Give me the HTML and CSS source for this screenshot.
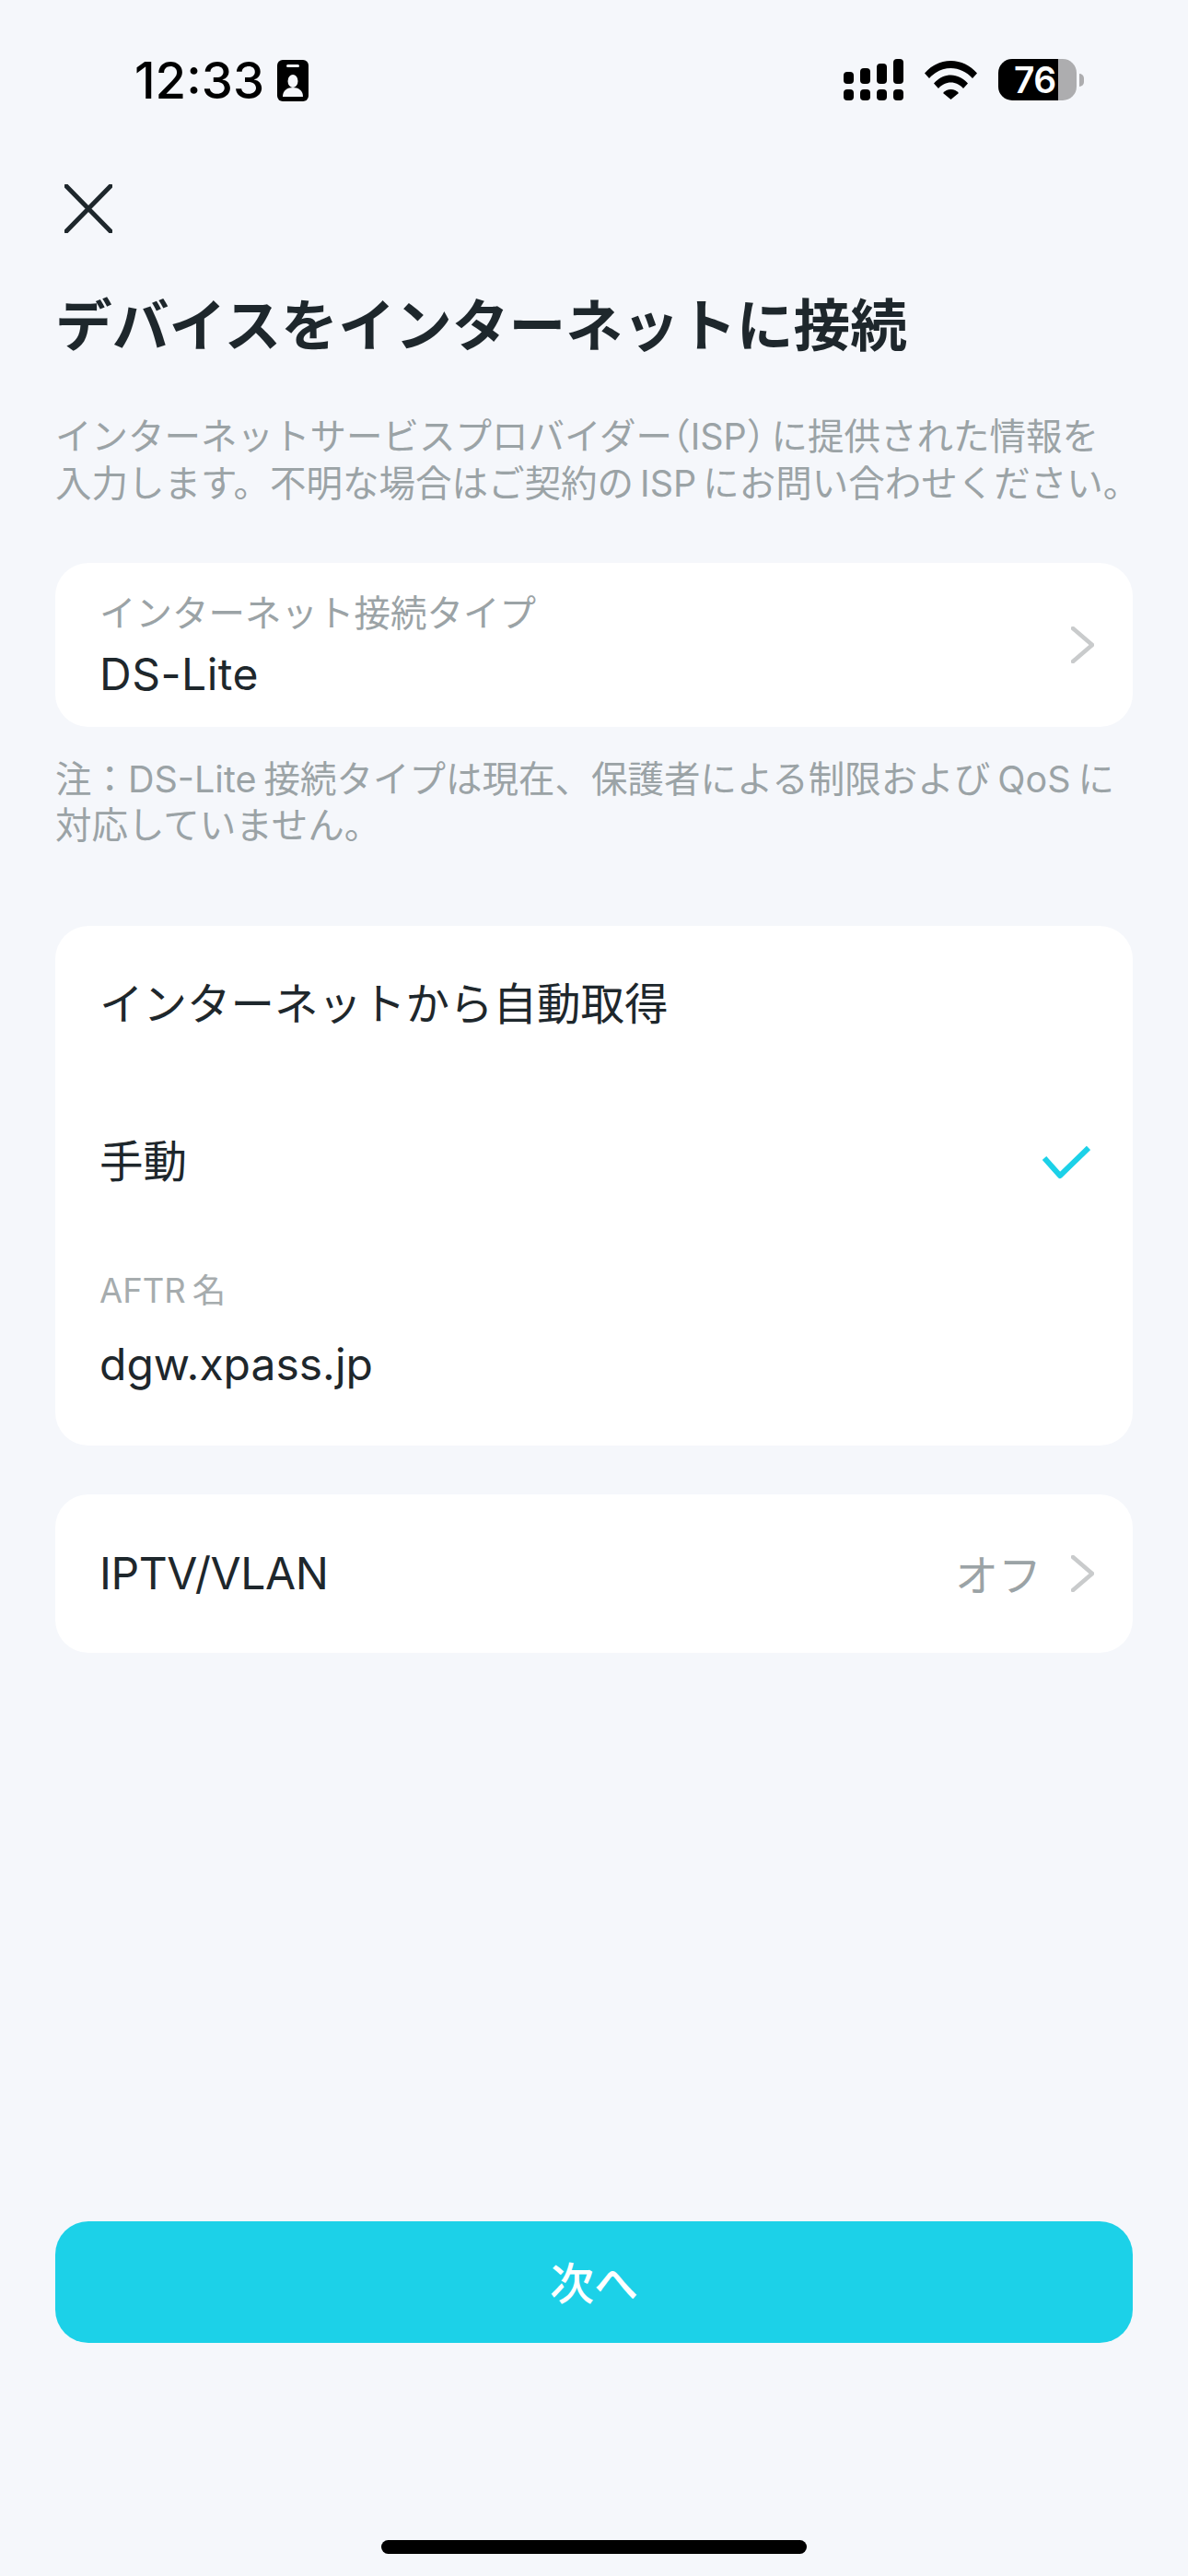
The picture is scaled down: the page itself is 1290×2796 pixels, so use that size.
FILE: index.html
```html
<!DOCTYPE html>
<html lang="ja">
<head>
    <meta charset="UTF-8">
    <meta name="viewport" content="width=device-width, initial-scale=1.0">
    <title>デバイスをインターネットに接続</title>
    <link rel="stylesheet" href="styles.css">
</head>
<body>
    <header class="status-bar">
        <div class="status-left">
            <span class="clock">12:33</span>
            <svg class="id-icon" viewBox="0 0 34 45">
                <rect width="34" height="45" rx="6" fill="#000"/>
                <rect x="10" y="5" width="14" height="3" rx="1.5" fill="#f5f7fb"/>
                <ellipse cx="17" cy="23" rx="5.5" ry="7" fill="#f5f7fb"/>
                <path d="M6 40c0-7 5-10 11-10s11 3 11 10z" fill="#f5f7fb"/>
            </svg>
        </div>
        <div class="status-right">
            <svg class="signal-icon" viewBox="0 0 65 45">
                <rect x="0" y="14" width="11" height="13" rx="4"/>
                <rect x="18" y="10" width="11" height="17" rx="4"/>
                <rect x="36" y="5" width="11" height="22" rx="4"/>
                <rect x="54" y="0" width="11" height="27" rx="4"/>
                <rect x="0" y="33" width="11" height="12" rx="4"/>
                <rect x="18" y="33" width="11" height="12" rx="4"/>
                <rect x="36" y="33" width="11" height="12" rx="4"/>
                <rect x="54" y="33" width="11" height="12" rx="4"/>
            </svg>
            <svg class="wifi-icon" viewBox="0 0 57 42">
                <path d="M0 13.500C7.500 5 17.500 0 28.500 0S49.500 5 57 13.500l-5 5.500C45.500 12 37.500 8 28.500 8S11.500 12 5 19z"/>
                <path d="M10 24.500C15 19 21.500 15.500 28.500 15.500S42 19 47 24.500l-5 5.500c-3.500-4-8.500-6.500-13.500-6.500S18.500 26 15 30z"/>
                <path d="M20 35c2.200-2.500 5.200-4 8.500-4s6.300 1.500 8.500 4l-8.500 7z"/>
            </svg>
            <div class="battery">
                <span class="battery-level">76</span>
            </div>
            <span class="battery-nub"></span>
        </div>
    </header>

    <main class="content">
        <button class="close-btn" aria-label="閉じる">
            <svg viewBox="0 0 52 53">
                <path d="M2 2l48 49M50 2L2 51"/>
            </svg>
        </button>
        <h1 class="title">デバイスをインターネットに接続</h1>
        <p class="hint hint-top">インターネットサービスプロバイダー<span class="halt">（</span>ISP<span class="halt">）</span><span class="gap"></span>に提供された情報を<br>入力します。不明な場合はご契約の<span class="gap"></span>ISP<span class="gap"></span>にお問い合わせください。</p>

        <section class="card card-type">
            <div class="type-text">
                <div class="field-label">インターネット接続タイプ</div>
                <div class="field-value">DS-Lite</div>
            </div>
            <svg class="chevron" viewBox="0 0 25 40"><path d="M2 2l21 18L2 38"/></svg>
        </section>
        <p class="hint hint-note">注：DS-Lite<span class="gap gap-note"></span>接続タイプは現在、保護者による制限および<span class="gap gap-note"></span>QoS<span class="gap gap-note"></span>に<br>対応していません。</p>

        <section class="card card-mode">
            <div class="option">インターネットから自動取得</div>
            <div class="option option-manual">
                <span>手動</span>
                <svg class="check" viewBox="0 0 52 37"><path d="M2 14l17 19L50 3"/></svg>
            </div>
            <div class="aftr">
                <div class="aftr-label">AFTR<span class="gap"></span>名</div>
                <div class="field-value">dgw.xpass.jp</div>
            </div>
        </section>

        <section class="card card-iptv">
            <span class="field-value">IPTV/VLAN</span>
            <div class="row-end">
                <span class="off-text">オフ</span>
                <svg class="chevron" viewBox="0 0 25 40"><path d="M2 2l21 18L2 38"/></svg>
            </div>
        </section>
    </main>

    <footer class="bottom">
        <button class="next-btn">次へ</button>
        <div class="home-bar"></div>
    </footer>
</body>
</html>
```

FILE: styles.css
```css
* {
    box-sizing: border-box;
}
body {
    margin: 0;
    width: 1290px;
    height: 2796px;
    display: flex;
    flex-direction: column;
    background-color: #f5f7fb;
    color: #1e272c;
    font-family: 'Inter', 'Noto Sans CJK JP', sans-serif;
    overflow: hidden;
}

/* status bar */
.status-bar {
    height: 120px;
    padding: 64px 113px 0 146px;
    display: flex;
    justify-content: space-between;
    align-items: flex-start;
}
.status-left {
    display: flex;
    align-items: center;
    gap: 14px;
}
.clock {
    font-size: 54.500px;
    font-weight: 500;
    line-height: 46px;
    color: #000;
}
.id-icon {
    width: 34px;
    height: 45px;
}
.status-right {
    display: flex;
    align-items: center;
}
.signal-icon {
    width: 65px;
    height: 45px;
    fill: #000;
    margin-right: 23px;
}
.wifi-icon {
    width: 57px;
    height: 42px;
    fill: #000;
    margin-right: 23px;
}
.battery {
    width: 85px;
    height: 45px;
    border-radius: 15px;
    background: linear-gradient(to right, #000 65px, #adadaf 65px);
    display: flex;
    align-items: center;
    padding-left: 17px;
}
.battery-level {
    color: #fff;
    font-size: 39px;
    font-weight: 600;
    line-height: 45px;
    letter-spacing: -0.5px;
}
.battery-nub {
    width: 5px;
    height: 14px;
    margin-left: 3px;
    background-color: #adadaf;
    border-radius: 0 7px 7px 0;
}

/* main */
.content {
    padding: 0 60px;
}
.close-btn {
    display: block;
    margin: 80px 0 0 10px;
    padding: 0;
    width: 52px;
    height: 53px;
    border: none;
    background: none;
}
.close-btn svg {
    display: block;
    width: 52px;
    height: 53px;
    fill: none;
    stroke: #1e272c;
    stroke-width: 5;
    stroke-linecap: round;
}
.title {
    margin: 61px 0 0;
    font-size: 61.800px;
    line-height: 80px;
    font-weight: 700;
    white-space: nowrap;
}
.hint {
    margin: 0;
    font-size: 39.500px;
    line-height: 51px;
    color: #9ba3a6;
    white-space: nowrap;
}
.halt {
    font-feature-settings: "halt";
}
.gap {
    display: inline-block;
    width: 7px;
}
.gap-note {
    width: 8px;
}
.hint-top {
    margin-top: 55px;
}
.hint-note {
    margin-top: 32px;
    line-height: 50px;
}
.card {
    background-color: #fff;
    border-radius: 36px;
}
.card-type {
    margin-top: 60px;
    height: 178px;
    padding: 0 42px 0 48px;
    display: flex;
    justify-content: space-between;
    align-items: center;
}
.type-text {
    padding-top: 6px;
}
.field-label {
    font-size: 39.500px;
    line-height: 54px;
    color: #9ba3a6;
}
.field-value {
    font-size: 48px;
    line-height: 66px;
    letter-spacing: -0.4px;
}
.card-type .field-value {
    margin-top: 4px;
    line-height: 70px;
    letter-spacing: 0.5px;
}
.chevron {
    width: 25px;
    height: 40px;
    fill: none;
    stroke: #c9cbcc;
    stroke-width: 4.5;
    stroke-linecap: round;
    stroke-linejoin: round;
}
.card-mode {
    margin-top: 84px;
    height: 564px;
    padding: 0 46px 0 48px;
}
.option {
    height: 166px;
    padding-bottom: 4px;
    display: flex;
    justify-content: space-between;
    align-items: center;
    font-size: 47.500px;
}
.option-manual {
    height: 176px;
}
.check {
    width: 52px;
    height: 37px;
    margin-top: 8px;
    fill: none;
    stroke: #1cd1e8;
    stroke-width: 6;
    stroke-linejoin: round;
}
.aftr {
    padding-top: 32px;
}
.aftr-label {
    font-size: 36.500px;
    line-height: 44px;
    color: #a6acae;
}
.aftr .field-value {
    margin-top: 25px;
    letter-spacing: 0;
}
.card-iptv {
    margin-top: 53px;
    height: 172px;
    padding: 0 42px 0 48px;
    display: flex;
    justify-content: space-between;
    align-items: center;
}
.row-end {
    display: flex;
    align-items: center;
    gap: 32px;
}
.off-text {
    font-size: 47px;
    padding-bottom: 3px;
    color: #9ba3a6;
}

/* bottom */
.bottom {
    margin-top: auto;
    padding: 0 60px 24px;
    display: flex;
    flex-direction: column;
    align-items: center;
}
.next-btn {
    width: 100%;
    height: 132px;
    padding-bottom: 6px;
    border: none;
    border-radius: 36px;
    background-color: #1cd1e8;
    color: #fff;
    font-family: inherit;
    font-size: 48px;
    font-weight: 500;
}
.home-bar {
    margin-top: 214px;
    width: 462px;
    height: 15px;
    border-radius: 8px;
    background-color: #000;
}
```
